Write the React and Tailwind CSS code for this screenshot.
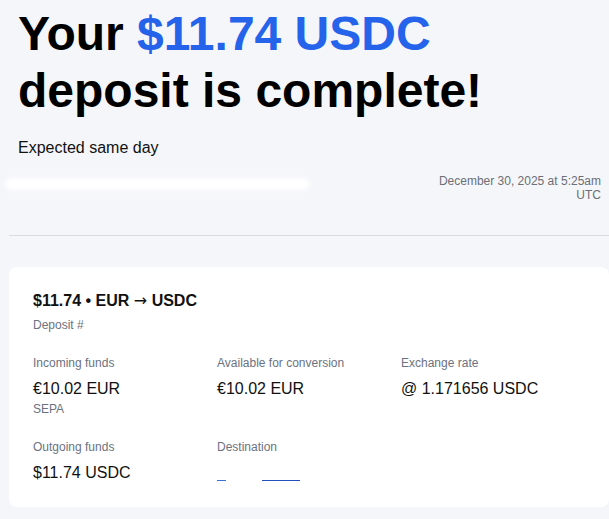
import React from 'react';

const details = [
  { label: 'Incoming funds', value: '€10.02 EUR', sub: 'SEPA' },
  { label: 'Available for conversion', value: '€10.02 EUR' },
  { label: 'Exchange rate', value: '@ 1.171656 USDC' },
  { label: 'Outgoing funds', value: '$11.74 USDC' },
  { label: 'Destination', link: true },
];

function Detail({ item }) {
  return (
    <div>
      <div className="text-xs leading-4 text-[#6b7280]">{item.label}</div>
      {item.link ? (
        <div className="mt-[6px] h-6 flex items-end pb-[4px] gap-[36px]">
          <span className="block w-[9px] border-b-[1.5px] border-[#3b6fd8]"></span>
          <span className="block w-[38px] border-b-[1.5px] border-[#2150b8]"></span>
        </div>
      ) : (
        <div className="mt-[6px] text-base leading-6 text-[#111]">{item.value}</div>
      )}
      {item.sub && <div className="text-xs leading-4 text-[#6b7280]">{item.sub}</div>}
    </div>
  );
}

export default function App() {
  return (
    <div className="min-h-screen bg-[#f5f6fa] pl-[9px] font-['Liberation_Sans',Arial,sans-serif]">
      <div className="px-[9px] pt-[5px] pr-[8px]">
        <h1 className="text-[48px] font-bold leading-[57px] text-black">
          Your <span className="text-[#2563eb]">$11.74 USDC</span>
          <br />
          deposit is complete!
        </h1>
        <p className="mt-[17px] text-base leading-6 text-[#111]">Expected same day</p>

        <div className="mt-[14px] flex justify-between items-start">
          <div className="-ml-[13px] mt-[4px] h-[12px] w-[305px] rounded-full bg-white blur-[2px]"></div>
          <div className="text-right text-xs leading-[14px] text-[#6b6f76]">
            December 30, 2025 at 5:25am
            <br />
            UTC
          </div>
        </div>
      </div>

      <div className="mt-[33px] border-t border-[#d9dbe1]"></div>

      <div className="mt-[31px] rounded-lg bg-white px-6 pt-6 pb-[22px]">
        <div className="text-base font-bold leading-5 text-[#111]">
          $11.74 • EUR <span className="font-normal font-['DejaVu_Sans',sans-serif]">→</span> USDC
        </div>
        <div className="mt-[6px] text-xs leading-4 text-[#6b7280]">Deposit #</div>

        <div className="mt-[22px] grid grid-cols-3 gap-y-[22px]">
          {details.map((item) => (
            <Detail key={item.label} item={item} />
          ))}
        </div>
      </div>
    </div>
  );
}
